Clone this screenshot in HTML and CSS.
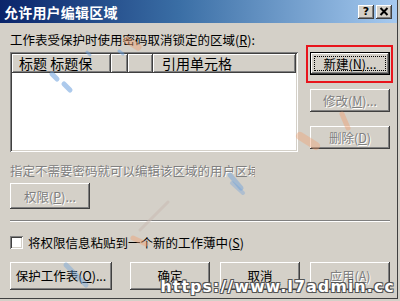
FILE: index.html
```html
<!DOCTYPE html>
<html>
<head>
<meta charset="utf-8">
<link rel="stylesheet" href="styles.css">
</head>
<body>
<div class="dialog">
  <div class="titlebar">
    <span class="title">允许用户编辑区域</span>
    <div class="title-btns">
      <span class="tbtn help">?</span>
      <span class="tbtn"><svg width="10" height="9" viewBox="0 0 10 9"><path d="M1.5 1 L8.5 8 M8.5 1 L1.5 8" stroke="#000" stroke-width="2"/></svg></span>
    </div>
  </div>
  <div class="content">
    <div class="label">工作表受保护时使用密码取消锁定的区域(<u>R</u>):</div>
    <div class="main-row">
      <div class="listbox">
        <div class="list-head">
          <div class="hcell c1"><span class="clip">标题 标题保</span></div>
          <div class="hcell c2"></div>
          <div class="hcell c3"></div>
          <div class="hcell c4">引用单元格</div>
        </div>
      </div>
      <div class="side">
        <div class="hl-wrap">
          <button class="btn side-btn default">新建(<u>N</u>)...</button>
          <span class="redbox"></span>
        </div>
        <button class="btn side-btn disabled">修改(<u>M</u>)...</button>
        <button class="btn side-btn disabled">删除(<u>D</u>)</button>
      </div>
    </div>
    <div class="hint disabled">指定不需要密码就可以编辑该区域的用户区域的用户</div>
    <button class="btn perm disabled">权限(<u>P</u>)...</button>
    <div class="sep"></div>
    <div class="check-row"><span class="checkbox"></span><span>将权限信息粘贴到一个新的工作薄中(<u>S</u>)</span></div>
    <div class="bottom-row">
      <button class="btn big wide">保护工作表(<u>O</u>)...</button>
      <button class="btn big">确定</button>
      <button class="btn big">取消</button>
      <button class="btn big disabled">应用(<u>A</u>)</button>
    </div>
  </div>
  <svg class="marks" width="397" height="298" viewBox="0 0 397 298">
    <g stroke-linecap="round" fill="none">
      <path d="M127 40 L138 47" stroke="#f0a070" stroke-width="7" opacity="0.45"/>
      <path d="M52 74 L57 79 M64 84 L70 90" stroke="#6a9fdc" stroke-width="5" opacity="0.55"/>
      <path d="M87 52 L90 55 M119 51 L123 54" stroke="#6a9fdc" stroke-width="3" opacity="0.5"/>
      <path d="M342 114 L348 128" stroke="#f0a070" stroke-width="5" opacity="0.45"/>
      <path d="M300 136 L316 146" stroke="#f0a070" stroke-width="8" opacity="0.4"/>
      <path d="M230 175 L241 188" stroke="#6a9fdc" stroke-width="5" opacity="0.45"/>
      <path d="M232 183 L243 193" stroke="#6a9fdc" stroke-width="4" opacity="0.35"/>
      <path d="M140 230 L168 202" stroke="#c8b8b0" stroke-width="3" opacity="0.5"/>
      <path d="M133 238 L146 244" stroke="#f0a070" stroke-width="5" opacity="0.45"/>
      <path d="M66 265 L86 285" stroke="#6a9fdc" stroke-width="5" opacity="0.4"/>
    </g>
  </svg>
  <div class="watermark">https://www.l7admin.cc</div>
</div>
</body>
</html>
```
FILE: styles.css
```css
html, body {
  margin: 0;
  padding: 0;
}
body {
  background: #d4d0c8;
  font-family: "Noto Sans CJK SC", "Liberation Sans", sans-serif;
  font-size: 12.5px;
  color: #000;
}
.dialog {
  position: relative;
  width: 397px;
  height: 298px;
  background: #d4d0c8;
  border-right: 1px solid #404040;
  border-bottom: 1px solid #404040;
  overflow: hidden;
  display: flex;
  flex-direction: column;
}
.titlebar {
  height: 23px;
  flex: none;
  background: linear-gradient(to right, #0a246a 0%, #3a6ea5 45%, #a6caf0 100%);
  display: flex;
  align-items: center;
  justify-content: space-between;
  padding: 0 5px 0 4px;
}
.title {
  color: #fff;
  font-weight: bold;
  font-size: 14px;
  line-height: 16px;
  letter-spacing: 0.2px;
}
.title-btns {
  display: flex;
  gap: 2px;
}
.tbtn {
  width: 16px;
  height: 14px;
  box-sizing: border-box;
  background: #d4d0c8;
  box-shadow: inset -1px -1px #404040, inset 1px 1px #fff, inset -2px -2px #808080;
  display: flex;
  align-items: center;
  justify-content: center;
  font-family: "DejaVu Sans", sans-serif;
  font-weight: bold;
  font-size: 11px;
  line-height: 12px;
}
.content {
  padding: 10px 7px 0 10px;
  display: flex;
  flex-direction: column;
}
.label {
  line-height: 14px;
  height: 14px;
  white-space: nowrap;
}
.main-row {
  display: flex;
  gap: 12px;
  margin-top: 5px;
}
.listbox {
  width: 288px;
  height: 100px;
  box-sizing: border-box;
  padding: 2px;
  background: #fff;
  box-shadow: inset 1px 1px #808080, inset -1px -1px #fff, inset 2px 2px #404040, inset -2px -2px #d4d0c8;
}
.list-head {
  display: flex;
  height: 19px;
}
.hcell {
  box-sizing: border-box;
  height: 19px;
  background: #d4d0c8;
  box-shadow: inset -1px -1px #404040, inset 1px 1px #fff, inset -2px -2px #808080;
  font-size: 14px;
  line-height: 19px;
  white-space: nowrap;
  overflow: hidden;
}
.c1 { width: 99px; padding-left: 7px; }
.c2 { width: 17px; }
.c3 { width: 25px; }
.c4 { flex: 1; padding-left: 9px; }
.clip {
  display: inline-block;
  width: 80px;
  overflow: hidden;
  vertical-align: top;
}
.side {
  width: 80px;
  display: flex;
  flex-direction: column;
  gap: 14px;
}
.btn {
  font: inherit;
  color: #000;
  margin: 0;
  padding: 0;
  border: 0;
  background: #d4d0c8;
  box-shadow: inset -1px -1px #404040, inset 1px 1px #fff, inset -2px -2px #808080;
  box-sizing: border-box;
  width: 80px;
  white-space: nowrap;
  text-align: center;
}
.side-btn {
  height: 23px;
  line-height: 21px;
}
.hl-wrap {
  position: relative;
  height: 23px;
}
.btn.default {
  border: 1px solid #000;
  outline: 1px dotted #000;
  outline-offset: -5px;
}
.redbox {
  position: absolute;
  left: -4px;
  top: -7px;
  right: -3px;
  bottom: -8px;
  border: 2px solid #e8141c;
}
.disabled {
  color: #808080;
  text-shadow: 1px 1px #fff;
}
.hint {
  margin-top: 12px;
  height: 13px;
  line-height: 13px;
  width: 245px;
  overflow: hidden;
  white-space: nowrap;
}
.perm {
  margin-top: 6px;
  height: 26px;
}
.sep {
  margin-top: 11px;
  border-top: 1px solid #808080;
  border-bottom: 1px solid #fff;
}
.check-row {
  margin-top: 14px;
  height: 13px;
  line-height: 13px;
  display: flex;
  align-items: center;
  gap: 5px;
  white-space: nowrap;
}
.checkbox {
  width: 13px;
  height: 13px;
  background: #fff;
  box-shadow: inset 1px 1px #808080, inset -1px -1px #fff, inset 2px 2px #404040, inset -2px -2px #d4d0c8;
}
.bottom-row {
  margin-top: 13px;
  display: flex;
  gap: 10px;
}
.big {
  height: 28px;
  line-height: 26px;
}
.wide {
  width: 102px;
  margin-right: 8px;
}
.marks {
  position: absolute;
  left: 0;
  top: 0;
  pointer-events: none;
}
.watermark {
  position: absolute;
  right: 2px;
  bottom: 3px;
  font-family: "DejaVu Sans", sans-serif;
  font-weight: bold;
  font-size: 15.5px;
  line-height: 15px;
  letter-spacing: 1.3px;
  color: #fff;
  text-shadow: 1px 1px 0 #555, -1px -1px 0 #555, 1px -1px 0 #555, -1px 1px 0 #555, 0 1px 0 #555, 0 -1px 0 #555;
}
```
